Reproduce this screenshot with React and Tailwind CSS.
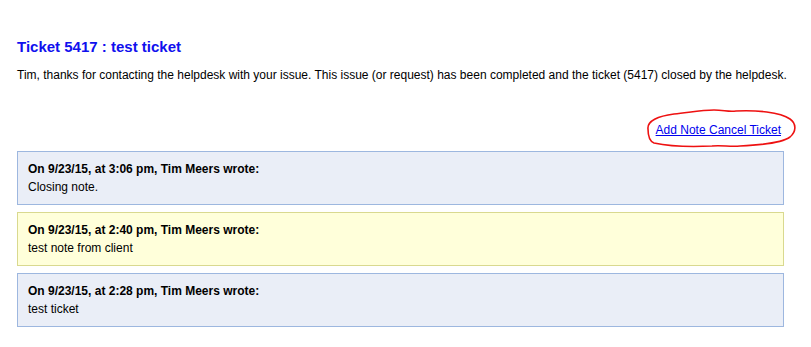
export default function App() {
  const notes = [
    { head: 'On 9/23/15, at 3:06 pm, Tim Meers wrote:', body: 'Closing note.', kind: 'staff' },
    { head: 'On 9/23/15, at 2:40 pm, Tim Meers wrote:', body: 'test note from client', kind: 'client' },
    { head: 'On 9/23/15, at 2:28 pm, Tim Meers wrote:', body: 'test ticket', kind: 'staff' },
  ];

  return (
    <div className="w-[811px] h-[347px] bg-white text-black font-['Liberation_Sans',Arial,sans-serif] text-[12px] leading-[18px] pt-[38px] pl-[17px] pr-[27px]">
      <h1 className="text-[15px] leading-[18px] font-bold text-[#1010ee]">Ticket 5417 : test ticket</h1>
      <p className="mt-[10px] whitespace-nowrap">
        Tim, thanks for contacting the helpdesk with your issue. This issue (or request) has been completed and the ticket (5417) closed by the helpdesk.
      </p>

      <div className="flex justify-end mt-[37px] pr-[3px]">
        <div className="relative">
          <a href="#" className="text-[#0000ee] underline">Add Note Cancel Ticket</a>
          {/* hand-drawn red circle */}
          <svg className="absolute left-[-12px] top-[-14px] pointer-events-none" width="154" height="42" viewBox="0 0 154 42" fill="none">
            <path
              d="M4 22 C 3 14, 14 9, 30 7 C 48 5, 58 3, 70 3 C 80 3, 84 5, 92 4 C 112 3, 136 5, 146 12 C 153 17, 152 25, 146 30 C 138 36, 118 38, 96 39 C 86 40, 78 38, 68 39 C 48 40, 24 39, 10 36 C 5 34, 4 28, 4 22 Z"
              stroke="#ee1111"
              strokeWidth="1.6"
            />
          </svg>
        </div>
      </div>

      <div className="mt-[12px] flex flex-col gap-[7px]">
        {notes.map((n, i) => (
          <div
            key={i}
            className={`h-[54px] px-[10px] pt-[8px] border ${
              n.kind === 'client' ? 'bg-[#ffffda] border-[#d9d98f]' : 'bg-[#eaeef7] border-[#9db7df]'
            }`}
          >
            <div className="font-bold">{n.head}</div>
            <div>{n.body}</div>
          </div>
        ))}
      </div>
    </div>
  );
}
